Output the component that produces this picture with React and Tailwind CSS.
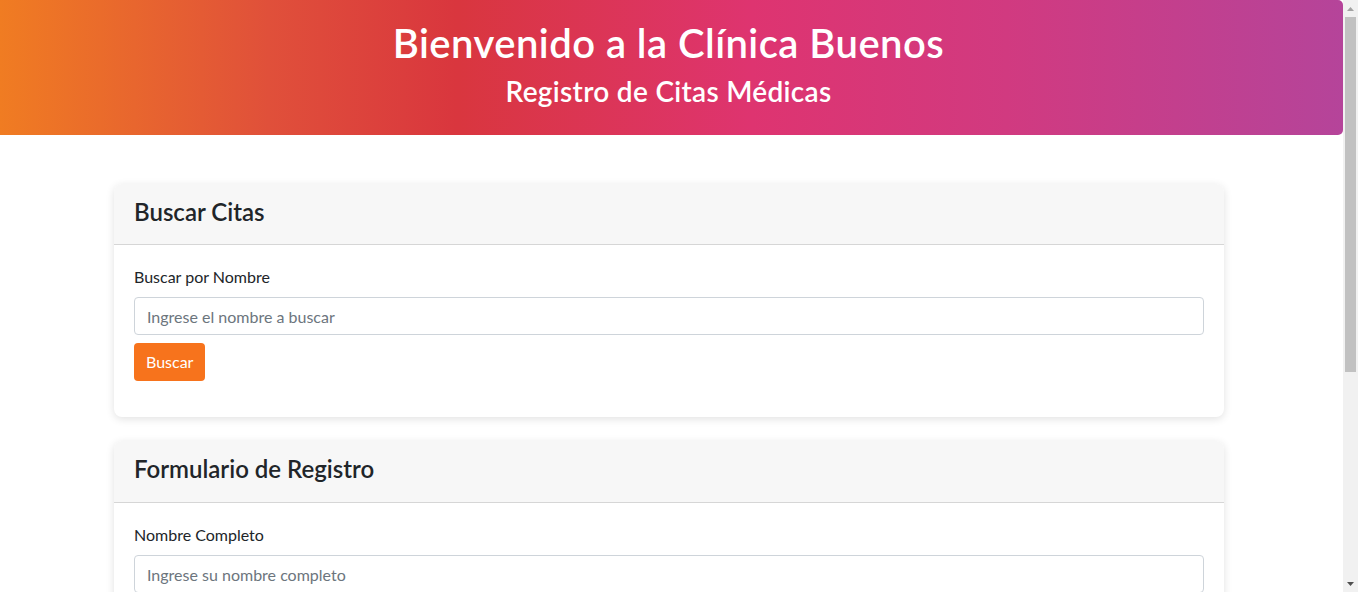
export default function App() {
  const font = { fontFamily: "Lato, 'Open Sans', sans-serif" };
  return (
    <div className="flex h-screen w-full overflow-hidden bg-white text-[#212529]" style={font}>
      <div className="flex-1 overflow-hidden">
        {/* Header */}
        <header className="flex h-[135px] flex-col items-center rounded-r-[5px] bg-[linear-gradient(90deg,#f07c22_0%,#e0503a_20%,#d9363e_34%,#de3470_56%,#d13a80_75%,#b5449a_100%)] pt-[19px] pr-[6px] text-white">
          <h1 className="text-[40px] font-semibold leading-[48px] tracking-[0.45px]">Bienvenido a la Clínica Buenos</h1>
          <h3 className="mt-[7px] text-[28px] font-semibold leading-[34px] tracking-[0.3px]">Registro de Citas Médicas</h3>
        </header>

        <main className="ml-[114px] w-[1110px] pt-[49px]">
          {/* Buscar */}
          <section className="mb-6 rounded-lg bg-white shadow-[0_2px_8px_rgba(0,0,0,0.12)]">
            <div className="rounded-t-lg border-b border-[#d6d6d6] bg-[#f7f7f7] px-5 pt-[14px] pb-[18px]">
              <h4 className="text-2xl font-semibold leading-[28px]">Buscar Citas</h4>
            </div>
            <div className="px-5 pt-5 pb-9">
              <label className="mb-2 block text-base leading-6">Buscar por Nombre</label>
              <input
                type="text"
                placeholder="Ingrese el nombre a buscar"
                className="block h-[38px] w-full rounded border border-[#ced4da] px-3 text-base placeholder:text-[#6c757d]"
              />
              <button className="mt-2 h-[38px] rounded bg-[#f7731c] px-3 text-base text-white">
                Buscar
              </button>
            </div>
          </section>

          {/* Registro */}
          <section className="rounded-lg bg-white shadow-[0_2px_8px_rgba(0,0,0,0.12)]">
            <div className="rounded-t-lg border-b border-[#d6d6d6] bg-[#f7f7f7] px-5 pt-[14px] pb-[19px]">
              <h4 className="text-2xl font-semibold leading-[28px]">Formulario de Registro</h4>
            </div>
            <div className="px-5 pt-5 pb-9">
              <label className="mb-2 block text-base leading-6">Nombre Completo</label>
              <input
                type="text"
                placeholder="Ingrese su nombre completo"
                className="block h-[38px] w-full rounded border border-[#ced4da] px-3 text-base placeholder:text-[#6c757d]"
              />
            </div>
          </section>
        </main>
      </div>

      {/* scrollbar */}
      <div className="flex w-[15px] flex-col bg-[#f1f1f1]">
        <div className="flex h-[17px] items-center justify-center">
          <svg width="7" height="4" viewBox="0 0 7 4"><path d="M0 4 L3.5 0 L7 4 Z" fill="#a3a3a3" /></svg>
        </div>
        <div className="mx-[2px] h-[355px] bg-[#c1c1c1]" />
        <div className="flex-1" />
        <div className="flex h-[17px] items-center justify-center">
          <svg width="7" height="4" viewBox="0 0 7 4"><path d="M0 0 L7 0 L3.5 4 Z" fill="#505050" /></svg>
        </div>
      </div>
    </div>
  );
}
